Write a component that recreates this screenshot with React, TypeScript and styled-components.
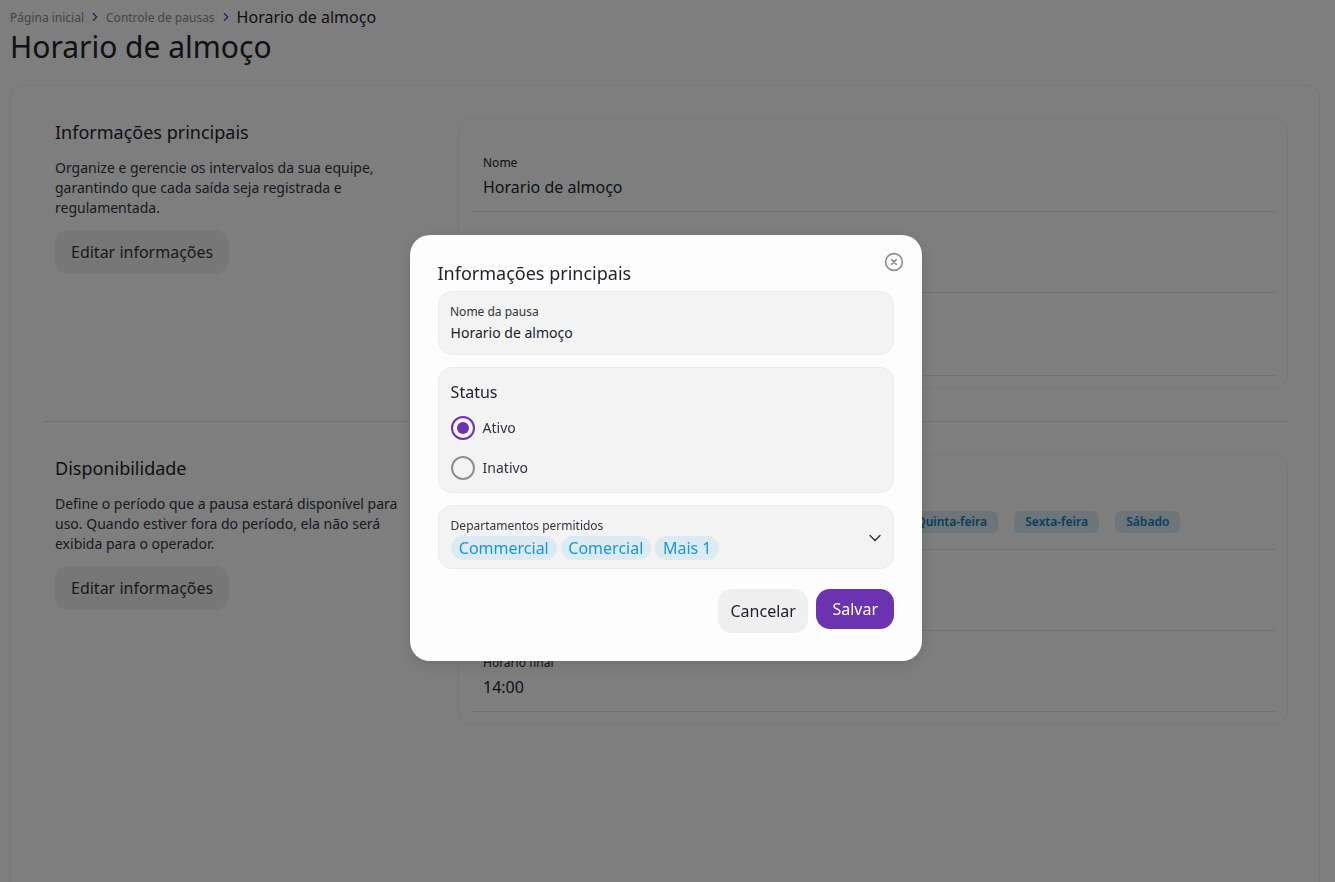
import React from "react";
import styled, { createGlobalStyle } from "styled-components";
import { ChevronDown, ChevronRight } from "lucide-react";

const GlobalStyle = createGlobalStyle`
  html, body {
    margin: 0;
    height: 100%;
    overflow: hidden;
    background-color: #fdfdfd;
    color: #22222a;
    font-family: "Noto Sans", "Liberation Sans", sans-serif;
  }
  * {
    box-sizing: border-box;
  }
`;

const Page = styled.div`
  padding: 6px 15px 0 10px;
`;

const Breadcrumb = styled.nav`
  display: flex;
  align-items: center;
  height: 22px;
  gap: 3px;
  font-size: 12px;
  color: #8a8a8a;

  svg {
    color: #6b33b0;
    margin: 0 1px;
  }

  .current {
    font-size: 16px;
    color: #22222a;
  }
`;

const Title = styled.h1`
  margin: 0 0 20px;
  font-size: 30px;
  font-weight: 400;
  line-height: 37px;
`;

const Card = styled.main`
  height: 900px;
  padding: 32px 31px 0 32px;
  border: 1px solid #f0f0f0;
  border-radius: 12px;
`;

const Section = styled.section`
  display: grid;
  grid-template-columns: 415px 830px;
`;

const Divider = styled.hr`
  margin: 32px 0;
  border: 0;
  border-top: 1px solid #e3e3e3;
`;

const Intro = styled.div`
  padding-left: 12px;
`;

const SectionTitle = styled.h2`
  margin: 0 0 13px;
  padding-top: 1px;
  font-size: 18px;
  font-weight: 400;
  line-height: 26px;
`;

const Description = styled.p`
  width: 350px;
  margin: 0 0 12px;
  font-size: 14px;
  line-height: 20px;
  color: #33333b;
`;

const GhostButton = styled.button`
  height: 44px;
  padding: 0 16px;
  border: 0;
  border-radius: 14px;
  background-color: #efefef;
  color: #33333b;
  font: inherit;
  font-size: 16px;
`;

const Panel = styled.div`
  padding: 12px;
  border: 1px solid #f0f0f0;
  border-radius: 14px;
`;

const Row = styled.div<{ $chips?: boolean }>`
  padding: 23px 12px ${({ $chips }) => ($chips ? "16px" : "12px")};
  border-bottom: 1px solid #e3e3e3;
`;

const RowLabel = styled.div`
  margin-bottom: 3px;
  font-size: 12px;
  line-height: 18px;
`;

const RowValue = styled.div`
  font-size: 16px;
  line-height: 24px;
`;

const DayChips = styled.div`
  display: flex;
  gap: 16.3px;
`;

const DayChip = styled.span`
  height: 22px;
  padding: 0 11px;
  border-radius: 6px;
  background-color: #dceaf1;
  color: #0b7cb8;
  font-size: 12px;
  font-weight: 600;
  line-height: 22px;
`;

const Overlay = styled.div`
  position: fixed;
  inset: 0;
  display: flex;
  align-items: center;
  justify-content: center;
  padding: 14px 3px 0 0;
  background-color: rgba(0, 0, 0, 0.5);
`;

const Modal = styled.div`
  position: relative;
  display: flex;
  flex-direction: column;
  gap: 12px;
  width: 512px;
  height: 426px;
  padding: 56px 28px 0;
  border-radius: 20px;
  background-color: #fdfdfd;
  box-shadow: 0 4px 16px rgba(0, 0, 0, 0.12);
`;

const CloseButton = styled.button`
  position: absolute;
  top: 17px;
  right: 18px;
  display: flex;
  width: 20px;
  height: 20px;
  padding: 0;
  border: 0;
  background: none;
`;

const ModalTitle = styled.h2`
  position: absolute;
  top: 25px;
  left: 27.5px;
  margin: 0;
  font-size: 18px;
  font-weight: 400;
  line-height: 26px;
`;

const Field = styled.div`
  position: relative;
  padding: 11px 12px 0;
  border: 1px solid #eaeaea;
  border-radius: 14px;
  background-color: #f3f3f3;
`;

const InputField = styled(Field)`
  height: 64px;
`;

const FieldLabel = styled.div`
  margin-left: -0.4px;
  font-size: 12px;
  line-height: 18px;
  color: #33333b;
`;

const InputLabel = styled(FieldLabel)`
  margin-left: -1px;
`;

const FieldValue = styled.div`
  margin: 2px 0 0 -0.4px;
  font-size: 14px;
  line-height: 20px;
`;

const StatusField = styled(Field)`
  height: 126px;
  padding-top: 12px;
`;

const StatusTitle = styled.div`
  margin: 0 0 4px -0.4px;
  font-size: 16px;
  line-height: 24px;
`;

const RadioRow = styled.label`
  display: flex;
  align-items: center;
  gap: 7.6px;
  height: 40px;
  font-size: 14px;
  color: #33333b;
`;

const RadioText = styled.span`
  margin-top: -2px;
`;

const RadioMark = styled.span<{ $checked?: boolean }>`
  display: flex;
  align-items: center;
  justify-content: center;
  width: 24px;
  height: 24px;
  border: 2px solid ${({ $checked }) => ($checked ? "#6b33b0" : "#8f8f8f")};
  border-radius: 50%;

  &::after {
    content: "";
    display: ${({ $checked }) => ($checked ? "block" : "none")};
    width: 12px;
    height: 12px;
    border-radius: 50%;
    background-color: #6b33b0;
  }
`;

const SelectField = styled(Field)`
  height: 64px;
`;

const SelectChips = styled.div`
  display: flex;
  gap: 4px;
  margin-top: 1px;
`;

const SelectChip = styled.span`
  height: 24px;
  padding: 0 7.8px;
  border-radius: 12px;
  background-color: #dceaf1;
  color: #1a96d6;
  font-size: 16px;
  line-height: 24px;
`;

const SelectArrow = styled(ChevronDown)`
  position: absolute;
  top: 22px;
  right: 8px;
  color: #33333b;
`;

const Actions = styled.div`
  display: flex;
  justify-content: flex-end;
  align-items: flex-start;
  gap: 8px;
  margin-top: 8px;
`;

const SaveButton = styled.button`
  height: 40px;
  padding: 0 16px;
  border: 0;
  border-radius: 14px;
  background-color: #6b33b0;
  color: #fdfdfd;
  font: inherit;
  font-size: 16px;
`;

const CancelButton = styled(GhostButton)`
  padding: 0 12.5px;
  color: #22222a;
`;

const days = [
  "Domingo",
  "Segunda-feira",
  "Terça-feira",
  "Quarta-feira",
  "Quinta-feira",
  "Sexta-feira",
  "Sábado",
];

const App: React.FC = () => {
  return (
    <>
      <GlobalStyle />
      <Page>
        <Breadcrumb>
          <span>Página inicial</span>
          <ChevronRight size={14} strokeWidth={2} />
          <span>Controle de pausas</span>
          <ChevronRight size={14} strokeWidth={2} />
          <span className="current">Horario de almoço</span>
        </Breadcrumb>
        <Title>Horario de almoço</Title>
        <Card>
          <Section>
            <Intro>
              <SectionTitle>Informações principais</SectionTitle>
              <Description>
                Organize e gerencie os intervalos da sua equipe, garantindo que cada saída seja
                registrada e regulamentada.
              </Description>
              <GhostButton>Editar informações</GhostButton>
            </Intro>
            <Panel>
              <Row>
                <RowLabel>Nome</RowLabel>
                <RowValue>Horario de almoço</RowValue>
              </Row>
              <Row>
                <RowLabel>Status</RowLabel>
                <RowValue>Ativo</RowValue>
              </Row>
              <Row $chips>
                <RowLabel>Departamentos permitidos</RowLabel>
                <DayChips>
                  <DayChip>Commercial</DayChip>
                  <DayChip>Comercial</DayChip>
                </DayChips>
              </Row>
            </Panel>
          </Section>
          <Divider />
          <Section>
            <Intro>
              <SectionTitle>Disponibilidade</SectionTitle>
              <Description>
                Define o período que a pausa estará disponível para uso. Quando estiver fora do
                período, ela não será exibida para o operador.
              </Description>
              <GhostButton>Editar informações</GhostButton>
            </Intro>
            <Panel>
              <Row $chips>
                <RowLabel>Dias da semana</RowLabel>
                <DayChips>
                  {days.map((day) => (
                    <DayChip key={day}>{day}</DayChip>
                  ))}
                </DayChips>
              </Row>
              <Row>
                <RowLabel>Horario inicial</RowLabel>
                <RowValue>12:00</RowValue>
              </Row>
              <Row>
                <RowLabel>Horario final</RowLabel>
                <RowValue>14:00</RowValue>
              </Row>
            </Panel>
          </Section>
        </Card>
      </Page>
      <Overlay>
        <Modal>
          <ModalTitle>Informações principais</ModalTitle>
          <CloseButton aria-label="Fechar">
            <svg width="20" height="20" viewBox="0 0 20 20" fill="none">
              <circle cx="10" cy="10" r="8.4" stroke="#8f8f8f" strokeWidth="1.6" />
              <path d="M7.8 7.8l4.4 4.4M12.2 7.8l-4.4 4.4" stroke="#7f7f7f" strokeWidth="1.6" strokeLinecap="round" />
            </svg>
          </CloseButton>
          <InputField>
            <InputLabel>Nome da pausa</InputLabel>
            <FieldValue>Horario de almoço</FieldValue>
          </InputField>
          <StatusField>
            <StatusTitle>Status</StatusTitle>
            <RadioRow>
              <RadioMark $checked />
              <RadioText>Ativo</RadioText>
            </RadioRow>
            <RadioRow>
              <RadioMark />
              <RadioText>Inativo</RadioText>
            </RadioRow>
          </StatusField>
          <SelectField>
            <FieldLabel>Departamentos permitidos</FieldLabel>
            <SelectChips>
              <SelectChip>Commercial</SelectChip>
              <SelectChip>Comercial</SelectChip>
              <SelectChip>Mais 1</SelectChip>
            </SelectChips>
            <SelectArrow size={20} strokeWidth={1.7} />
          </SelectField>
          <Actions>
            <CancelButton>Cancelar</CancelButton>
            <SaveButton>Salvar</SaveButton>
          </Actions>
        </Modal>
      </Overlay>
    </>
  );
};

export default App;
